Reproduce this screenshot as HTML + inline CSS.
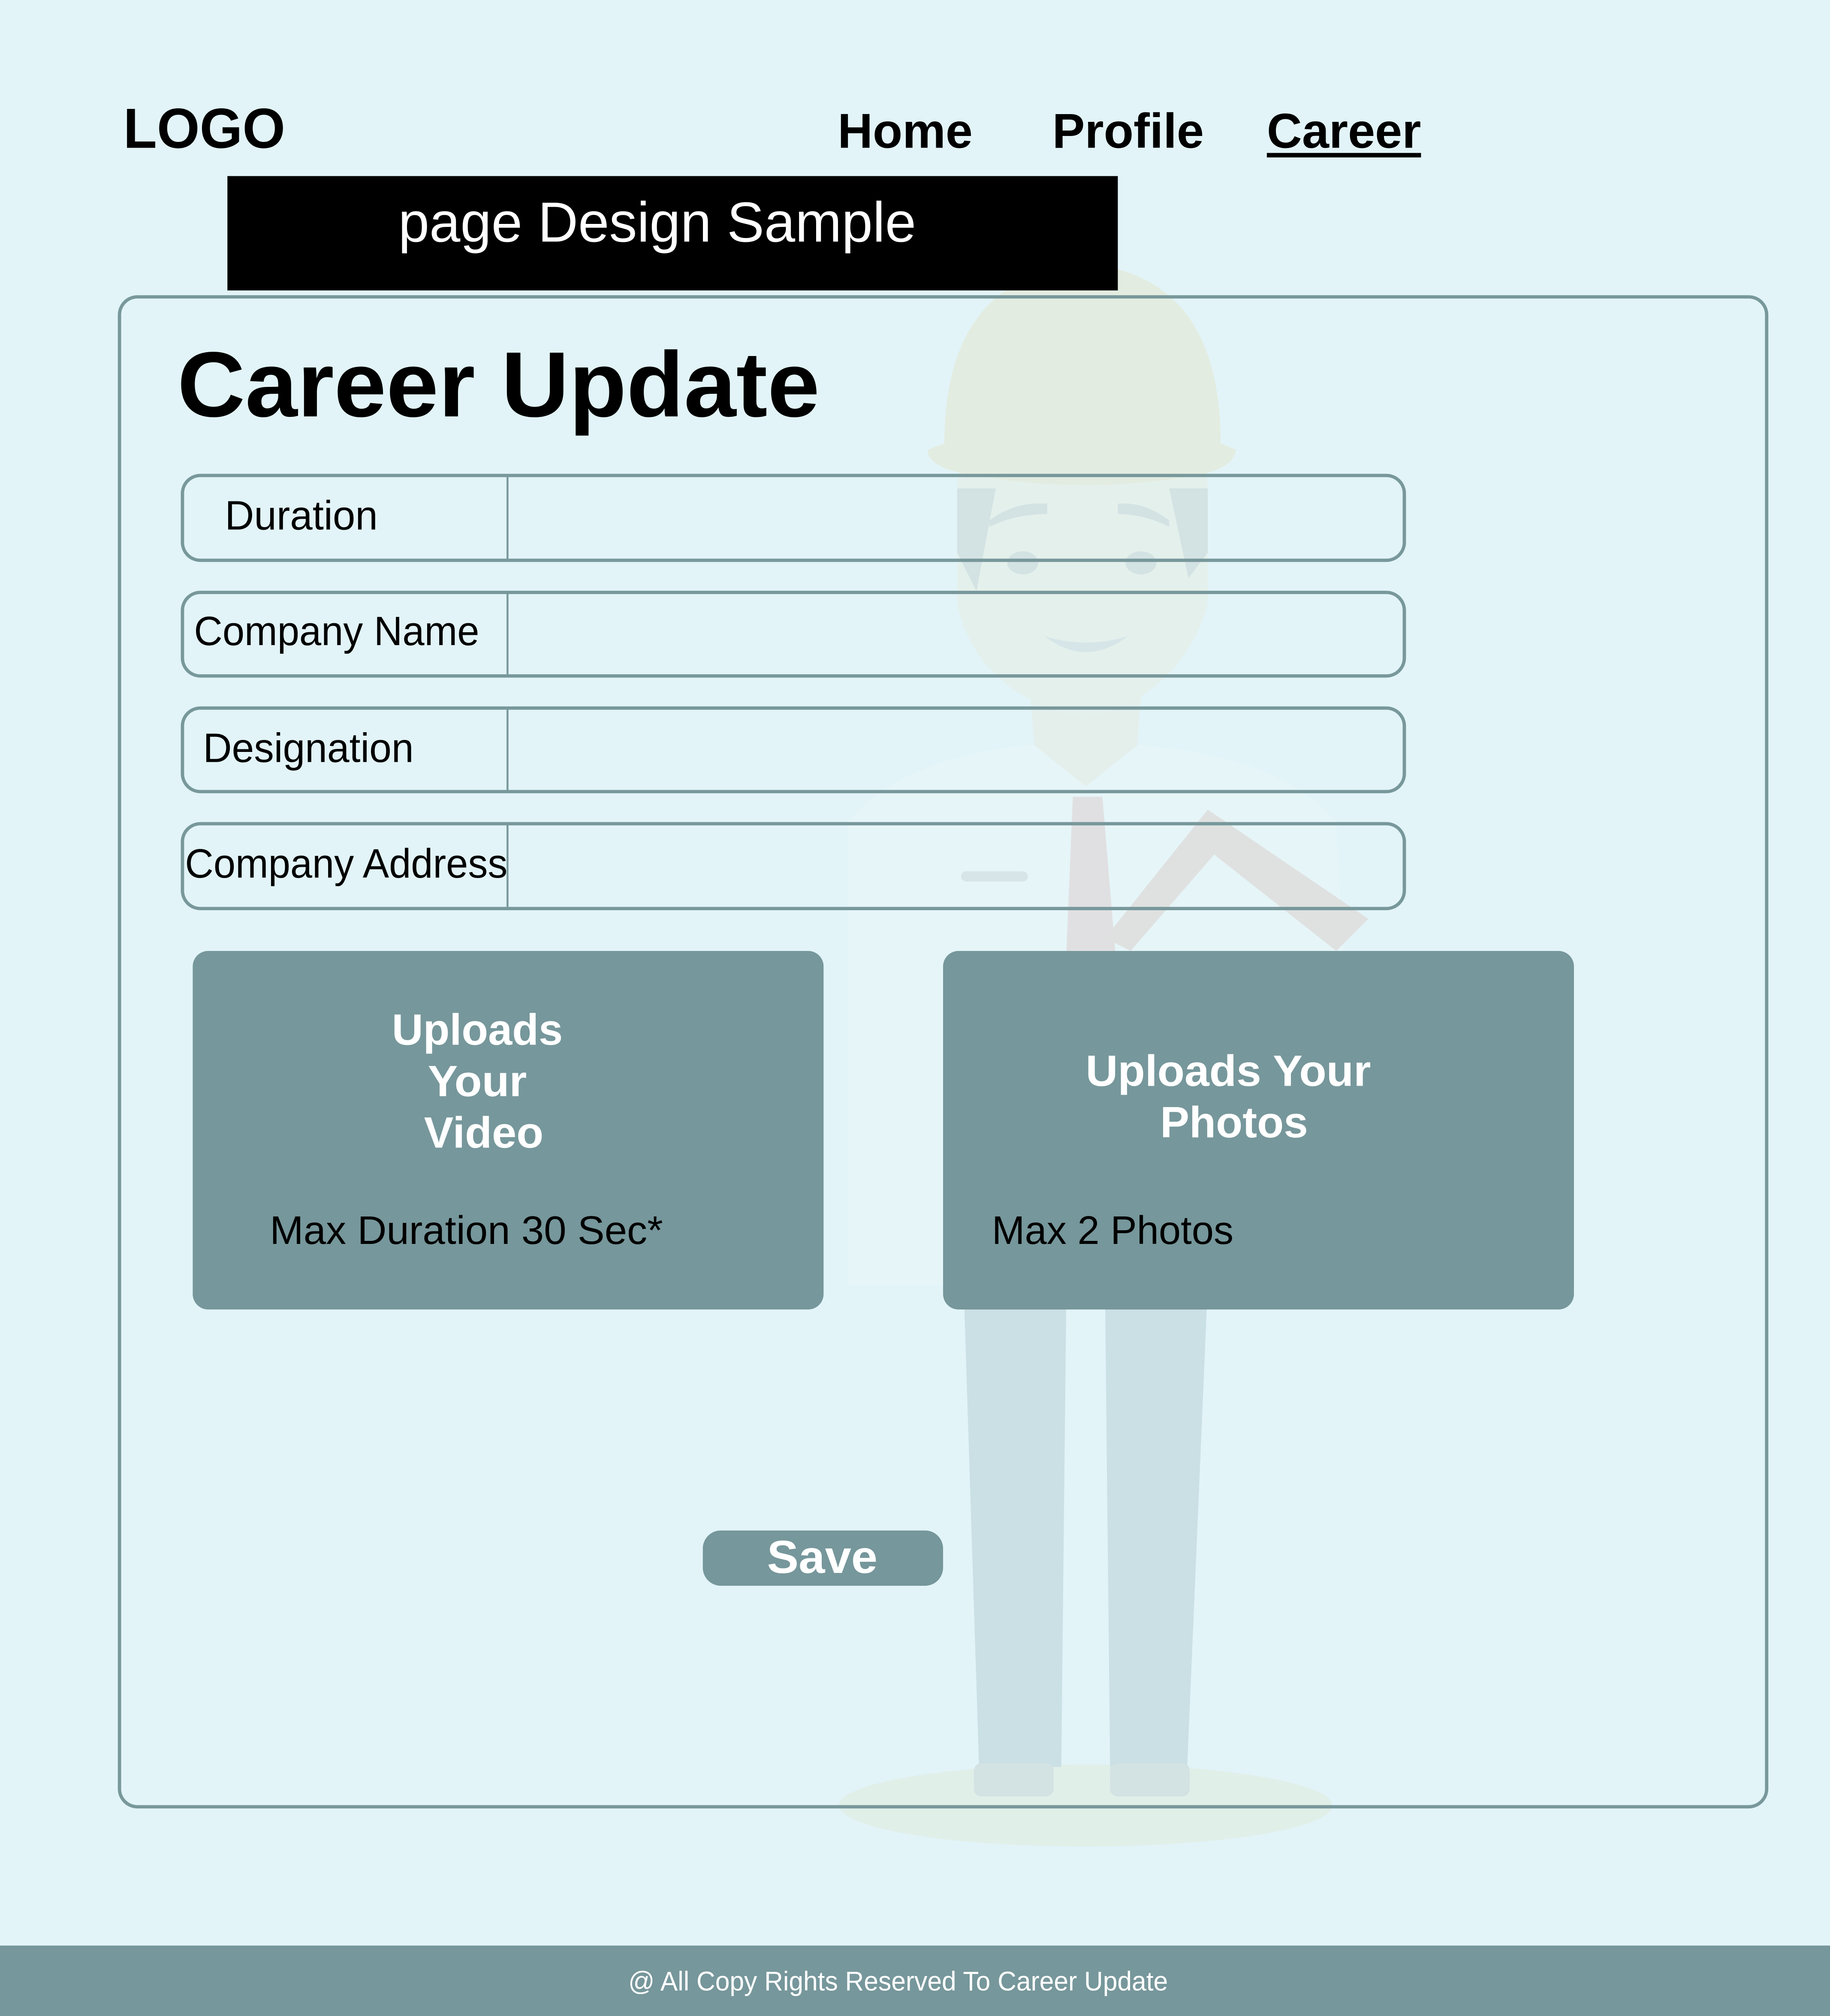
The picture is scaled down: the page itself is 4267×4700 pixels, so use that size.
<!DOCTYPE html>
<html><head><meta charset="utf-8"><style>
html,body{margin:0;padding:0;background:#e2f4f8;}
svg{display:block;}
text{font-family:"Liberation Sans",sans-serif;}
</style></head><body>
<svg width="4267" height="4700" viewBox="0 0 1424.3 1568.8" xmlns="http://www.w3.org/2000/svg">
<rect width="1424.3" height="1568.8" fill="#e2f4f8"/>
<!-- faint character -->
<ellipse cx="845" cy="1405" rx="192" ry="32" fill="#e1efe9"/>
<path d="M660 640 Q700 590 800 580 L890 580 Q1000 590 1040 640 L1060 1000 L660 1000 Z" fill="#e6f5f8"/>
<path d="M750 1000 L830 1000 L826 1375 L762 1375 Z" fill="#cbe0e5"/>
<path d="M860 1000 L940 1000 L924 1375 L864 1375 Z" fill="#cbe0e5"/>
<rect x="758" y="1372" width="62" height="26" rx="6" fill="#d3e2e2"/>
<rect x="864" y="1372" width="62" height="26" rx="6" fill="#d3e2e2"/>
<path d="M800 520 L890 520 L885 580 L845 612 L805 580 Z" fill="#e4efec"/>
<path d="M835 620 L858 620 L868 740 L830 740 Z" fill="#e0e0e2"/>
<path d="M860 730 L940 630 L1065 715 L1040 740 L945 665 L880 740 Z" fill="#dfe1e1"/>
<path d="M745 380 Q745 330 840 330 Q940 330 940 380 L940 470 Q920 540 845 560 Q760 540 745 470 Z" fill="#e4f0ec"/>
<path d="M745 380 L775 380 L760 460 L745 430 Z" fill="#d3e2e2"/>
<path d="M940 380 L910 380 L925 450 L940 430 Z" fill="#d3e2e2"/>
<path d="M770 405 Q790 390 815 392 L815 400 Q790 400 770 410 Z" fill="#d3e2e2"/>
<path d="M910 405 Q890 390 870 392 L870 400 Q890 400 910 410 Z" fill="#d3e2e2"/>
<ellipse cx="796" cy="438" rx="12" ry="9" fill="#d3e2e2"/>
<ellipse cx="888" cy="438" rx="12" ry="9" fill="#d3e2e2"/>
<path d="M813 495 Q845 505 878 495 Q845 520 813 495 Z" fill="#d6e6e8"/>
<path d="M735 345 Q735 215 845 205 Q950 215 950 345 L962 350 Q960 365 930 370 Q845 385 760 370 Q722 365 722 350 Z" fill="#e3ece0"/>
<rect x="748" y="678" width="52" height="8" rx="4" fill="#d8e5e8"/>
<!-- header -->
<text x="96" y="115" font-size="44" font-weight="bold" textLength="126" lengthAdjust="spacingAndGlyphs">LOGO</text>
<text x="652" y="115" font-size="38" font-weight="bold" textLength="105" lengthAdjust="spacingAndGlyphs">Home</text>
<text x="819" y="115" font-size="38" font-weight="bold" textLength="118" lengthAdjust="spacingAndGlyphs">Profile</text>
<text x="986" y="115" font-size="38" font-weight="bold" textLength="120" lengthAdjust="spacingAndGlyphs">Career</text>
<rect x="986" y="119" width="120" height="3.5" fill="#000"/>
<rect x="177" y="137" width="693" height="89" fill="#000"/>
<text x="310" y="188" font-size="44" fill="#fff" textLength="403" lengthAdjust="spacingAndGlyphs">page Design Sample</text>
<!-- outer box -->
<rect x="93" y="231" width="1282" height="1175" rx="14" fill="none" stroke="#78989b" stroke-width="2.6"/>
<text x="138" y="324" font-size="72" font-weight="bold" textLength="500" lengthAdjust="spacingAndGlyphs">Career Update</text>
<!-- fields -->
<g fill="none" stroke="#78989b" stroke-width="2.6">
<rect x="142" y="370" width="951" height="66" rx="14"/>
<rect x="142" y="461" width="951" height="65" rx="14"/>
<rect x="142" y="551" width="951" height="65" rx="14"/>
<rect x="142" y="641" width="951" height="66" rx="14"/>
</g>
<g stroke="#78989b" stroke-width="1.5">
<line x1="395" y1="371" x2="395" y2="436"/>
<line x1="395" y1="462" x2="395" y2="526"/>
<line x1="395" y1="552" x2="395" y2="616"/>
<line x1="395" y1="642" x2="395" y2="707"/>
</g>
<g font-size="32">
<text x="175" y="412" textLength="119" lengthAdjust="spacingAndGlyphs">Duration</text>
<text x="151" y="502" textLength="222" lengthAdjust="spacingAndGlyphs">Company Name</text>
<text x="158" y="593" textLength="164" lengthAdjust="spacingAndGlyphs">Designation</text>
<text x="144" y="683" textLength="251" lengthAdjust="spacingAndGlyphs">Company Address</text>
</g>
<!-- upload boxes -->
<rect x="150" y="740" width="491" height="279" rx="12" fill="#76979b"/>
<rect x="734" y="740" width="491" height="279" rx="12" fill="#76979b"/>
<g font-size="34" font-weight="bold" fill="#fff">
<text x="305" y="813" textLength="133" lengthAdjust="spacingAndGlyphs">Uploads</text>
<text x="333" y="853" textLength="77" lengthAdjust="spacingAndGlyphs">Your</text>
<text x="330" y="893" textLength="93" lengthAdjust="spacingAndGlyphs">Video</text>
<text x="845" y="845" textLength="222" lengthAdjust="spacingAndGlyphs">Uploads Your</text>
<text x="903" y="885" textLength="115" lengthAdjust="spacingAndGlyphs">Photos</text>
</g>
<g font-size="31">
<text x="210" y="968" textLength="306" lengthAdjust="spacingAndGlyphs">Max Duration 30 Sec*</text>
<text x="772" y="968" textLength="188" lengthAdjust="spacingAndGlyphs">Max 2 Photos</text>
</g>
<!-- save -->
<rect x="547" y="1191" width="187" height="43" rx="14" fill="#76979b"/>
<text x="597" y="1224" font-size="36" font-weight="bold" fill="#fff" textLength="86" lengthAdjust="spacingAndGlyphs">Save</text>
<!-- footer -->
<rect x="0" y="1514" width="1424.3" height="55" fill="#76979b"/>
<text x="489" y="1549" font-size="21" fill="#fff" textLength="420" lengthAdjust="spacingAndGlyphs">@ All Copy Rights Reserved To Career Update</text>
</svg>
</body></html>
